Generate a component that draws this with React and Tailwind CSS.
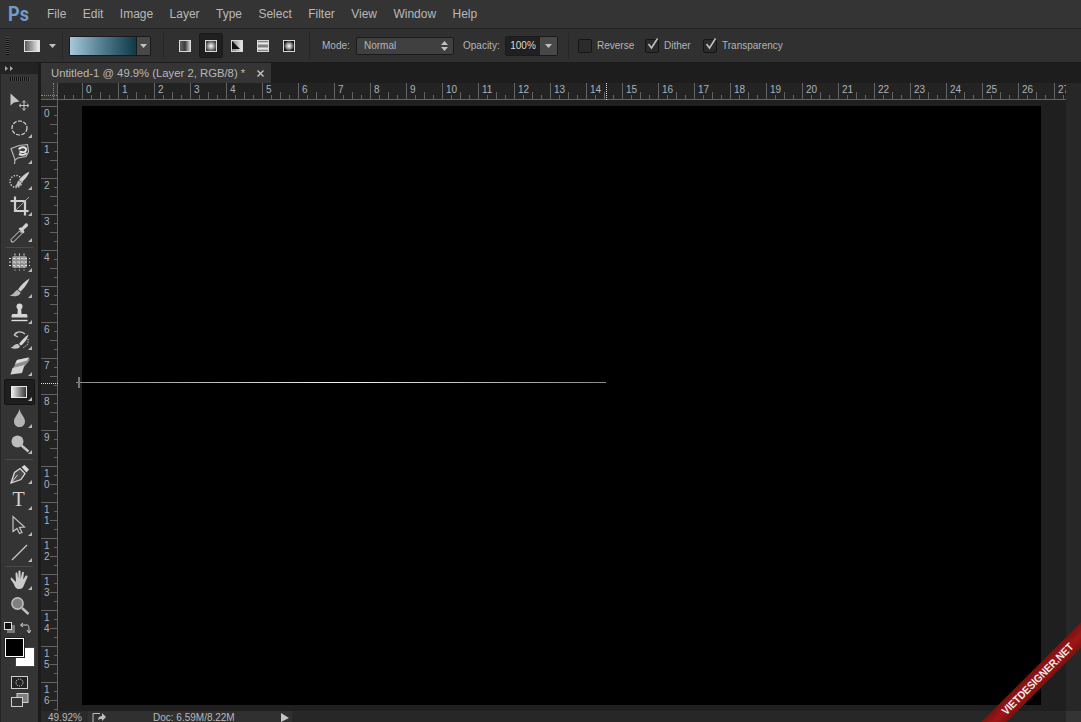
import React from "react"

const menus = ["File", "Edit", "Image", "Layer", "Type", "Select", "Filter", "View", "Window", "Help"]
const hLabels = Array.from({ length: 28 }, (_, i) => i)
const vLabels = Array.from({ length: 17 }, (_, i) => i)

// petite icone 24x24 de la barre d'outils
const Icon = ({ children }) => (
    <svg width="24" height="24" viewBox="0 0 24 24" fill="none">{children}</svg>
)

const tools1 = [
    <Icon key="move">
        <path d="M2.5 3.5 L2.5 15.5 L6 12.5 L11.5 11.5 Z" fill="#c4c4c4" />
        <path d="M16 11 V20 M11.5 15.5 H20.5" stroke="#c4c4c4" strokeWidth="1.1" />
        <path d="M14.3 12.5 L16 10.5 L17.7 12.5 M14.3 18.5 L16 20.5 L17.7 18.5 M13 13.8 L11 15.5 L13 17.2 M19 13.8 L21 15.5 L19 17.2" stroke="#c4c4c4" strokeWidth="0.9" />
    </Icon>,
    <Icon key="marquee">
        <ellipse cx="11.5" cy="12" rx="7.5" ry="7" stroke="#d8d8d8" strokeWidth="1.2" strokeDasharray="4 1.4" />
    </Icon>,
    <Icon key="lasso">
        <path d="M3 6.5 L11 3.5 L19.5 2.5 L20.5 10 L18 14.5 L10 16 L7 18 Z" stroke="#bdbdbd" strokeWidth="1.1" fill="#3c3c3c" />
        <path d="M11 7.5 C12 4.5 19 4.5 18 8 C17.5 10.5 15 10.5 11.5 9.5 M11 12 C13.5 13 17 13 18.5 11" stroke="#e4e4e4" strokeWidth="1.9" />
        <path d="M7 18 L6.5 22" stroke="#bdbdbd" strokeWidth="1.1" />
    </Icon>,
    <Icon key="quick">
        <circle cx="8" cy="13.5" r="6" stroke="#dcdcdc" strokeWidth="1.3" strokeDasharray="1.3 1.5" />
        <path d="M21.5 3.5 C17 5.5 13 9 11 12 L13.5 14 C16.5 12 20 8 21.5 3.5 Z" fill="#d0d0d0" />
        <path d="M10.5 12.5 C9 14 9.5 16.5 6.5 18.5 C10.5 19.5 13.5 17.5 13.5 14.5 Z" fill="#bcbcbc" />
    </Icon>,
    <Icon key="crop">
        <path d="M7 2.5 V17 H20.5 M2.5 7 H17 V21.5" stroke="#cfcfcf" strokeWidth="2.2" />
        <path d="M8 16 L21 3" stroke="#aaa" strokeWidth="0.9" />
    </Icon>,
    <Icon key="eyedropper">
        <path d="M3.5 22 L3 19.5 L11.5 11 L14 13.5 L5.5 22 Z" stroke="#d2d2d2" strokeWidth="1" />
        <path d="M10.5 9 L15 13.5 L16.5 12 L15.5 10 L19.5 6.5 C21 5 19 2.5 17.5 3.5 L13.8 7.5 L12 7.5 Z" fill="#d0d0d0" />
    </Icon>,
]

const tools2 = [
    <Icon key="patch">
        <rect x="4" y="6" width="15" height="12" rx="2" fill="#8f8f8f" />
        <path d="M7 3.5 V20.5 M11.5 3.5 V20.5 M16 3.5 V20.5 M1 8.5 H22 M1 12 H22 M1 15.5 H22" stroke="#dcdcdc" strokeWidth="1" strokeDasharray="2 2" />
    </Icon>,
    <Icon key="brush">
        <path d="M21.5 2.5 C17 5 12.5 9.5 10 13.5 L12.5 15.5 C16 12.5 20 7 21.5 2.5 Z" fill="#d0d0d0" />
        <path d="M9.5 14 C6.5 14.5 6.5 18.5 1.5 19.5 C6 21 12 20.5 12.5 16.5 Z" fill="#b8b8b8" />
    </Icon>,
    <Icon key="stamp">
        <circle cx="11.5" cy="4.5" r="3" fill="#d6d6d6" />
        <path d="M9.8 6 H13.2 L13.5 12 H18 C19.5 12 19.5 14 19.5 15.5 H3.5 C3.5 14 3.5 12 5 12 H9.5 Z" fill="#d6d6d6" />
        <path d="M3.5 18.5 H19.5" stroke="#e0e0e0" strokeWidth="1.4" />
    </Icon>,
    <Icon key="history">
        <path d="M6 7 C8 3.5 13 2.5 17 6 M6 7 L10 4 M6 7 L10 9" stroke="#c8c8c8" strokeWidth="1.3" />
        <path d="M20.5 6.5 C17 9 13 13 11 16 L13 17.5 C16 15.5 19.5 11 20.5 6.5 Z" fill="#d6d6d6" />
        <path d="M10 16 C6 15.5 6 19 2.5 19.5 C6 21.5 11 21 12 18.5 Z" fill="#c4c4c4" />
        <path d="M20 11 L20 16 L15 20" stroke="#e4e4e4" strokeDasharray="1.2 1.2" />
    </Icon>,
    <Icon key="eraser">
        <path d="M9 6 L20.5 3.5 C22 3.5 21.5 6 21 7 L16.5 12.5 L4.5 15.5 Z" fill="#8e8e8e" />
        <path d="M9 6 L20.5 3.5 L19 6.5 L7 10 Z" fill="#dcdcdc" />
        <path d="M4.5 14 L16.5 11 L14 19 L2.5 20.5 Z" fill="#d2d2d2" />
    </Icon>,
]

const gradientTool = (
    <svg width="24" height="24" viewBox="0 0 24 24" fill="none">
        <defs>
            <linearGradient id="toolGrad" x1="0" x2="1" y1="0" y2="0">
                <stop offset="0" stopColor="#f4f4f4" />
                <stop offset="1" stopColor="#333" />
            </linearGradient>
        </defs>
        <rect x="3.5" y="6.5" width="15" height="11" fill="url(#toolGrad)" stroke="#e6e6e6" />
    </svg>
)

const tools3 = [
    <Icon key="blur">
        <path d="M11.5 3 C10.5 8 6 11 6 15.5 C6 19 8.5 21 11.5 21 C14.5 21 17 19 17 15.5 C17 11 12.5 8 11.5 3 Z" fill="#b4b4b4" />
    </Icon>,
    <Icon key="dodge">
        <circle cx="9.5" cy="9.5" r="6" fill="#bdbdbd" />
        <path d="M13.5 13.5 L20.5 19.5" stroke="#c4c4c4" strokeWidth="2.4" />
    </Icon>,
]

const tools4 = [
    <Icon key="pen">
        <path d="M3 21 L6.5 10.5 L12 6.5 L17 11.5 L13 17.5 Z" stroke="#d8d8d8" strokeWidth="1.3" fill="#4a4a4a" />
        <path d="M3 21 L9.5 13" stroke="#d8d8d8" />
        <path d="M13.5 5 L16.5 3 L21 7.5 L18.5 10.5 Z" fill="#d8d8d8" />
    </Icon>,
    <span key="text" className="text-[20px] leading-none text-[#d4d4d4] font-['Liberation_Serif',serif] -translate-x-[1px] -translate-y-[1px]">T</span>,
    <Icon key="path">
        <path d="M5 2.5 L5 17.5 L9 14.5 L11.5 19.5 L14 18.5 L11.5 13.5 L16.5 13 Z" stroke="#c4c4c4" strokeWidth="1.2" />
    </Icon>,
    <Icon key="line">
        <path d="M4 20 L19 5" stroke="#c8c8c8" strokeWidth="1.2" />
    </Icon>,
]

const tools5 = [
    <Icon key="hand">
        <path d="M4 10 L8 14 L7.5 5.5 C7.5 4 9.5 4 9.5 5.5 L10.3 11 L10.5 3.5 C10.5 2.2 12.5 2.2 12.5 3.5 L12.7 11 L14 4.5 C14.3 3.2 16.1 3.5 15.9 5 L15.1 11.5 L17.5 8 C18.5 7 20 7.8 19.5 9 L16 17 C15 20 13.5 21 11 21 C7.5 21 7 18.5 5.5 15.5 L2.8 11.5 C2.3 10 3.3 9 4 10 Z" fill="#cacaca" />
    </Icon>,
    <Icon key="zoom">
        <circle cx="9.5" cy="9.5" r="5.6" fill="#7f7f7f" stroke="#bcbcbc" strokeWidth="1.6" />
        <path d="M14 14 L20.5 20" stroke="#c0c0c0" strokeWidth="2.4" />
    </Icon>,
]

const Tool = ({ children, active, corner = true }) => (
    <div className={`relative h-[26px] flex items-center justify-center ${active ? "mx-[3px] bg-[#1e1e1e] border border-[#141414] rounded-[2px]" : ""}`}>
        {children}
        {corner && (
            <svg className={`absolute bottom-[3px] ${active ? "right-[2px]" : "right-[6px]"}`} width="4" height="4" viewBox="0 0 4 4">
                <path d="M4 0 V4 H0 Z" fill="#b8b8b8" />
            </svg>
        )}
    </div>
)

const Toolsep = ({ h = "h-[4px]" }) => (
    <div className={`${h} flex items-center px-[5px]`}>
        <div className="h-px w-full bg-[#4a4a4a]" />
    </div>
)

const Toolbox = () => (
    <div className="w-[41px] shrink-0 flex">
        <div className="w-[38px] bg-[#343434] border-l border-[#242424] flex flex-col">
            <div className="h-[11px] bg-[#232323] flex items-center pl-[4px]">
                <svg width="9" height="5" viewBox="0 0 9 5">
                    <path d="M0 0 L3 2.5 L0 5 Z M5 0 L8 2.5 L5 5 Z" fill="#a8a8a8" />
                </svg>
            </div>
            <div className="h-[15px] pt-[3px] pl-[9px]">
                <div className="w-[20px] h-[4px] bg-[repeating-linear-gradient(90deg,#101010_0,#101010_1px,#4a4a4a_1px,#4a4a4a_2px)]" />
            </div>
            {tools1.map((t, i) => <Tool key={i} corner={i > 0}>{t}</Tool>)}
            <Toolsep />
            {tools2.map((t, i) => <Tool key={i}>{t}</Tool>)}
            <Tool active>{gradientTool}</Tool>
            {tools3.map((t, i) => <Tool key={i}>{t}</Tool>)}
            <Toolsep />
            {tools4.map((t, i) => <Tool key={i}>{t}</Tool>)}
            <Toolsep h="h-[2px]" />
            {tools5.map((t, i) => <Tool key={i} corner={i === 0}>{t}</Tool>)}
            <div className="h-[17px] flex items-center justify-between pl-[3px] pr-[7px]">
                <svg width="11" height="11" viewBox="0 0 11 11">
                    <rect x="3.5" y="3.5" width="7" height="7" fill="#7a7a7a" stroke="#7a7a7a" />
                    <rect x="0.5" y="0.5" width="7" height="7" fill="#111" stroke="#ddd" />
                </svg>
                <svg width="11" height="12" viewBox="0 0 11 12" fill="none">
                    <path d="M1 3 H7 C9 3 9 5 9 10 M3 1 L0.5 3 L3 5 M7 8 L9 11 L11 8" stroke="#d4d4d4" />
                </svg>
            </div>
            <div className="relative h-[32px] mt-[2px]">
                <div className="absolute left-[14px] top-[9px] w-[20px] h-[20px] bg-white border border-[#444]" />
                <div className="absolute left-[4px] top-0 w-[19px] h-[19px] bg-black border border-white outline outline-1 outline-[#222]" />
            </div>
            <div className="h-[22px] flex items-center justify-center pt-[4px]">
                <svg width="18" height="14" viewBox="0 0 18 14" fill="none">
                    <rect x="0.5" y="0.5" width="16" height="12" fill="#222" stroke="#cfcfcf" />
                    <circle cx="8.5" cy="6.5" r="3.5" stroke="#e4e4e4" strokeDasharray="1.2 1.2" />
                </svg>
            </div>
            <div className="relative flex-1 flex items-start justify-center pt-[1px]">
                <svg width="18" height="15" viewBox="0 0 18 15" fill="none">
                    <rect x="6" y="0.5" width="11" height="9" fill="#7d7d7d" stroke="#cfcfcf" />
                    <rect x="0.5" y="4.5" width="11" height="9" fill="#343434" stroke="#cfcfcf" />
                </svg>
            </div>
        </div>
        <div className="w-[3px] bg-[#1b1b1b]" />
    </div>
)

const Grad = ({ id, radial, vert, stops }) => {
    const st = stops.map((c, i) => <stop key={i} offset={i / (stops.length - 1)} stopColor={c} />)
    return (
        <defs>
            {radial ? <radialGradient id={id}>{st}</radialGradient> : <linearGradient id={id} x1="0" x2={vert ? 0 : 1} y1="0" y2={vert ? 1 : 0}>{st}</linearGradient>}
        </defs>
    )
}

const modeIcon = (content) => (
    <svg width="12" height="12" viewBox="0 0 12 12">{content}</svg>
)

const rect = (fill) => <rect x="0.5" y="0.5" width="11" height="11" fill={fill} stroke="#d8d8d8" />

const modes = [
    modeIcon(<><Grad id="gLin" stops={["#6a6a6a", "#3a3a3a", "#dcdcdc"]} />{rect("url(#gLin)")}</>),
    modeIcon(<><Grad id="gRad" radial stops={["#fff", "#444"]} />{rect("url(#gRad)")}</>),
    modeIcon(<>
        <Grad id="gAng" stops={["#777", "#f0f0f0"]} />
        {rect("url(#gAng)")}
        <path d="M1 1 L9 9 L1 9 Z" fill="#111" />
    </>),
    modeIcon(<><Grad id="gRef" vert stops={["#444", "#f4f4f4", "#666", "#f4f4f4", "#444"]} />{rect("url(#gRef)")}</>),
    modeIcon(<>
        <Grad id="gDia" radial stops={["#fff", "#999", "#111"]} />
        {rect("url(#gDia)")}
    </>),
]

const Sep = ({ className }) => <div className={`w-px h-[26px] bg-[#262626] shrink-0 ${className}`} />

const Caret = () => (
    <svg width="7" height="4" viewBox="0 0 7 4"><path d="M0 0 H7 L3.5 4 Z" fill="#c0c0c0" /></svg>
)

const Check = ({ checked, children, className, labelWidth }) => (
    <div className={`flex items-center gap-[5px] ${className}`}>
        <div className="relative w-[14px] h-[14px] rounded-[2px] bg-[#2b2b2b] border border-[#151515]">
            {checked && (
                <svg className="absolute -top-[4px] left-0" width="14" height="15" viewBox="0 0 14 15" fill="none">
                    <path d="M2.5 8 L5.5 12 L11.5 2.5" stroke="#bdbdbd" strokeWidth="1.6" />
                </svg>
            )}
        </div>
        <span className={`${labelWidth} whitespace-nowrap`}>{children}</span>
    </div>
)

const OptionsBar = () => (
    <div className="h-[34px] bg-[#303030] border-b border-[#1d1d1d] flex items-center text-[10px] text-[#b4b4b4] shrink-0">
        <div className="w-[3px] h-[18px] ml-[6px] bg-[repeating-linear-gradient(0deg,#111_0,#111_1px,#4a4a4a_1px,#4a4a4a_2px)]" />
        <svg className="ml-[15px]" width="16" height="12" viewBox="0 0 16 12">
            <Grad id="gPreset" stops={["#555", "#f4f4f4"]} />
            <rect x="0.5" y="0.5" width="15" height="11" fill="url(#gPreset)" stroke="#e0e0e0" />
        </svg>
        <div className="ml-[9px] flex"><Caret /></div>
        <Sep className="ml-[6px]" />
        <div className="ml-[6px] w-[82px] h-[20px] flex border border-[#1a1a1a] rounded-[2px]">
            <div className="w-[67px] bg-gradient-to-r from-[#a8c8dc] via-[#4f7c8e] to-[#0f3a48] border-r border-[#1a1a1a]" />
            <div className="flex-1 bg-[#484848] flex items-center justify-center"><Caret /></div>
        </div>
        <Sep className="ml-[12px]" />
        <div className="ml-[8px] flex items-center">
            {modes.map((m, i) => (
                <div key={i} className="w-[26px] h-[25px] flex items-center justify-center">
                    <div className={`w-[24px] h-[25px] flex items-center justify-center rounded-[2px] ${i === 1 ? "bg-[#1f1f1f] border border-[#191919]" : ""}`}>{m}</div>
                </div>
            ))}
        </div>
        <Sep className="ml-[7px]" />
        <span className="ml-[12px] w-[34px]">Mode:</span>
        <div className="w-[98px] h-[18px] bg-[#404040] border border-[#1a1a1a] rounded-[2px] flex items-center justify-between pl-[7px] pr-[5px]">
            <span>Normal</span>
            <svg width="7" height="10" viewBox="0 0 7 10"><path d="M0 4 L3.5 0 L7 4 Z M0 6 H7 L3.5 10 Z" fill="#c0c0c0" /></svg>
        </div>
        <span className="ml-[9px] w-[42px]">Opacity:</span>
        <div className="w-[53px] h-[20px] flex border border-[#1a1a1a] rounded-[2px]">
            <div className="w-[34px] bg-[#202020] text-[#d8d8d8] flex items-center justify-center">100%</div>
            <div className="flex-1 bg-[#484848] flex items-center justify-center"><Caret /></div>
        </div>
        <Sep className="ml-[10px]" />
        <Check className="ml-[9px]" labelWidth="w-[35px]">Reverse</Check>
        <Check checked className="ml-[13px]" labelWidth="w-[27px]">Dither</Check>
        <Check checked className="ml-[12px]">Transparency</Check>
    </div>
)

const HRuler = () => (
    <div className="h-[17px] flex shrink-0">
        <div className="flex-1 min-w-0 flex overflow-hidden bg-[#232323] border-b border-[#636363]">
            <div className="relative w-[17px] shrink-0 bg-[#343434] border-r border-[#636363]">
                <div className="absolute left-[12px] top-0 bottom-0 border-l border-dotted border-[#8a8a8a]" />
                <div className="absolute left-0 right-0 top-[12px] border-t border-dotted border-[#8a8a8a]" />
            </div>
            <div className="relative w-[24px] shrink-0">
                <svg className="absolute bottom-0 left-0" width="24" height="7"><path d="M6.5 3 V7 M15.5 3 V7" stroke="#636363" /></svg>
            </div>
            {hLabels.map((n) => (
                <div key={n} className="relative w-9 shrink-0 border-l border-[#636363] pl-[3px] text-[10px] leading-[12px] pt-[1px] text-[#a9b2ba]">
                    {n}
                    <svg className="absolute bottom-0 left-0" width="35" height="7"><path d="M8.5 3 V7 M17.5 0 V7 M26.5 3 V7" stroke="#636363" /></svg>
                </div>
            ))}
        </div>
        <div className="w-[15px] shrink-0 bg-[#272727]" />
    </div>
)

const VRuler = () => (
    <div className="w-[17px] shrink-0 bg-[#232323] border-r border-[#636363] overflow-hidden flex flex-col">
        <div className="h-[6px] shrink-0" />
        {vLabels.map((n) => (
            <div key={n} className="relative h-9 shrink-0 border-t border-[#636363] pl-[3px] pt-[2px] text-[10px] leading-[10.5px] text-[#a9b2ba] flex flex-col">
                {String(n).split("").map((d, i) => <span key={i}>{d}</span>)}
                <svg className="absolute top-0 right-0" width="7" height="35"><path d="M4 8.5 H7 M0 17.5 H7 M4 26.5 H7" stroke="#636363" /></svg>
            </div>
        ))}
    </div>
)

const App = () => {
    return (
        <div className="relative w-[1081px] h-[722px] overflow-hidden flex flex-col bg-[#1f1f1f] font-['Liberation_Sans',sans-serif]">
            <div className="h-[29px] shrink-0 bg-[#343434] border-b border-[#222] flex items-center text-[12px] text-[#b8b8b8]">
                <div className="w-[47px] pl-[8px] font-bold text-[21px] text-[#6f9ccb] leading-none font-['Roboto',sans-serif]">
                    <span className="inline-block origin-left scale-x-[0.86]">Ps</span>
                </div>
                <div className="flex gap-[16.4px]">
                    {menus.map((m) => <span key={m}>{m}</span>)}
                </div>
            </div>
            <OptionsBar />
            <div className="flex flex-1 min-h-0">
                <Toolbox />
                <div className="flex-1 min-w-0 flex flex-col">
                    <div className="h-[20px] shrink-0 bg-[#1d1d1d] flex">
                        <div className="w-[230px] bg-[#353535] flex items-center justify-between pl-[10px] pr-[7px] text-[11.3px] text-[#b8b8b8]">
                            <span>Untitled-1 @ 49.9% (Layer 2, RGB/8) *</span>
                            <svg width="7" height="7" viewBox="0 0 7 7"><path d="M0.5 0.5 L6.5 6.5 M6.5 0.5 L0.5 6.5" stroke="#c8c8c8" strokeWidth="1.3" /></svg>
                        </div>
                    </div>
                    <HRuler />
                    <div className="flex-1 min-h-0 flex">
                        <VRuler />
                        <div className="flex-1 min-w-0 pl-[24px] pt-[6px] bg-[#1f1f1f]">
                            <div className="w-[959px] h-[599px] bg-black" />
                        </div>
                        <div className="w-[15px] shrink-0 bg-[#272727]" />
                    </div>
                    <div className="h-[11px] shrink-0 flex overflow-hidden text-[10px] leading-[14px] text-[#b8b8b8] bg-[#272727] whitespace-nowrap">
                        <div className="w-[47px] pl-[7px] bg-[#2a2a2a]">49.92%</div>
                        <div className="w-[204px] bg-[#303030] flex">
                            <svg className="ml-[4px] mt-[1px] shrink-0" width="14" height="10" viewBox="0 0 14 10" fill="none">
                                <path d="M8 1.5 H1 V10" stroke="#bdbdbd" />
                                <path d="M6 8 C6 5 8 4 10 4 V1 L14 5 L10 9 V7 C8 7 7 7 6 8 Z" fill="#bdbdbd" />
                            </svg>
                            <span className="ml-[47px] w-[80px]">Doc: 6.59M/8.22M</span>
                            <svg className="ml-[48px] mt-[2px] shrink-0" width="8" height="9" viewBox="0 0 8 9"><path d="M0 0 L8 5 L0 9 Z" fill="#c4c4c4" /></svg>
                        </div>
                        <div className="flex-1" />
                        <div className="w-[15px] bg-[#343434]" />
                    </div>
                </div>
            </div>

            {/* ligne du degrade tracee sur le document */}
            <div className="absolute left-[76px] top-[382px] w-[530px] h-px bg-gradient-to-r from-[#8a8a8a] via-[#f4f4f4] to-[#8a8a8a]" />
            <div className="absolute left-[78px] top-[377px] w-[2px] h-[11px] bg-[#777]" />
            <div className="absolute left-[606px] top-[83px] h-[17px] border-l border-dotted border-[#e0e0e0]" />
            <div className="absolute left-[41px] top-[383px] w-[17px] border-t border-dotted border-[#e0e0e0]" />

            {/* ruban du filigrane */}
            <div className="absolute left-[947px] top-[670px] w-[180px] h-[18px] -rotate-45 bg-gradient-to-b from-[#7c1010] via-[#a01616] to-[#7c1010] flex items-center justify-center text-[11px] font-bold text-[#ececec]">
                <span className="inline-block scale-x-[0.9] whitespace-nowrap">VIETDESIGNER.NET</span>
            </div>
        </div>
    )
}

export default App
